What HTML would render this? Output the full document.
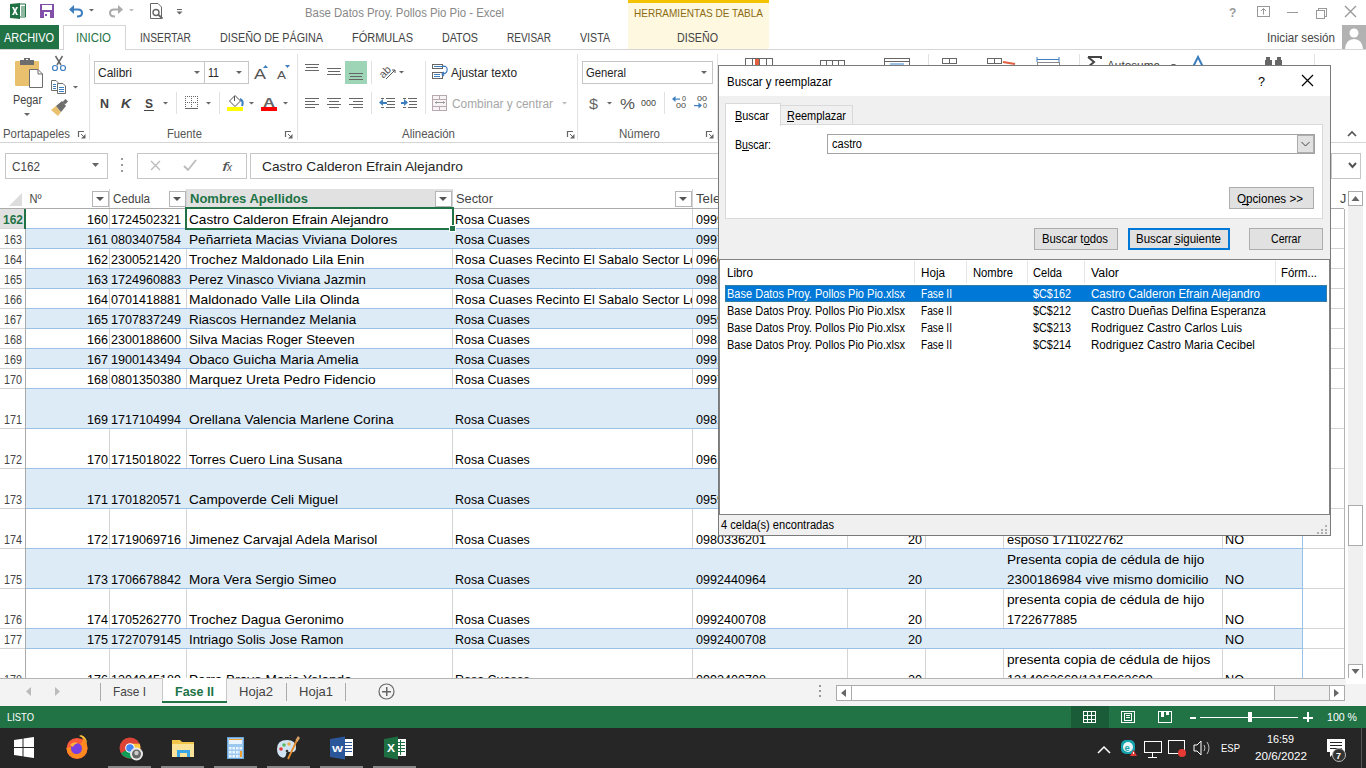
<!DOCTYPE html>
<html><head><meta charset="utf-8"><title>Excel</title>
<style>html,body{margin:0;padding:0;width:1366px;height:768px;overflow:hidden;background:#fff}
svg{display:block}text{font-family:"Liberation Sans",sans-serif;white-space:pre}</style></head><body>
<svg width="1366" height="768" viewBox="0 0 1366 768">
<rect x="0" y="0" width="1366" height="143" fill="#ffffff" />
<rect x="628" y="0" width="141" height="50" fill="#fef8e1" />
<rect x="628" y="0" width="141" height="3" fill="#f3c300" />
<text x="634" y="17" font-size="11.5" fill="#8d6b12" textLength="129" lengthAdjust="spacingAndGlyphs" >HERRAMIENTAS DE TABLA</text>
<text x="305" y="17" font-size="12" fill="#888" textLength="199" lengthAdjust="spacingAndGlyphs" >Base Datos Proy. Pollos Pio Pio - Excel</text>
<path d="M19 4 L25.5 4 L25.5 17 L19 17 Z" fill="#fff" stroke="#217346" stroke-width="1" />
<rect x="21" y="6.5" width="4" height="1" fill="#217346"/>
<rect x="21" y="8.5" width="4" height="1" fill="#217346"/>
<rect x="21" y="10.5" width="4" height="1" fill="#217346"/>
<rect x="21" y="12.5" width="4" height="1" fill="#217346"/>
<rect x="21" y="14.5" width="4" height="1" fill="#217346"/>
<path d="M10 4 L20 3 L20 19 L10 18 Z" fill="#1e7145" />
<path d="M12 7 L14 7 L15 9.5 L16 7 L18 7 L16 11 L18 15 L16 15 L15 12.5 L14 15 L12 15 L14 11 Z" fill="#fff" />
<rect x="40" y="4" width="14" height="14" fill="#8250a8" />
<rect x="42" y="5" width="10" height="5" fill="#ffffff" />
<rect x="44" y="12" width="6" height="6" fill="#ffffff" />
<rect x="45" y="14" width="2" height="2" fill="#8250a8" />
<path d="M71.5 9.5 L78 9.5 Q82 9.5 82 13 Q82 16.5 77 16.5" fill="none" stroke="#3d7ebf" stroke-width="2" />
<path d="M69 9.5 L74 5 L74 14 Z" fill="#3d7ebf" />
<path d="M89 9 L94 9 L91.5 11.5 Z" fill="#666" />
<path d="M120.5 9.5 L114 9.5 Q110 9.5 110 13 Q110 16.5 115 16.5" fill="none" stroke="#aaa" stroke-width="2" />
<path d="M123 9.5 L118 5 L118 14 Z" fill="#aaa" />
<path d="M129 9 L134 9 L131.5 11.5 Z" fill="#bbb" />
<path d="M150.5 3.5 L158 3.5 L161.5 7 L161.5 18.5 L150.5 18.5 Z" fill="#fff" stroke="#666" stroke-width="1" />
<circle cx="156" cy="12.5" r="3" fill="#fff" stroke="#666" stroke-width="1.4"/>
<path d="M158 14.5 L162.5 18.5" fill="none" stroke="#666" stroke-width="1.8" />
<rect x="177" y="9" width="5" height="1" fill="#666"/>
<path d="M176.5 11.5 L182.5 11.5 L179.5 14.5 Z" fill="#666" />
<text x="1229" y="17" font-size="12" fill="#999" font-weight="bold" >?</text>
<rect x="1257.5" y="6.5" width="12" height="10" fill="#fff" stroke="#999" stroke-width="1" />
<path d="M1263.5 8.5 L1263.5 14.5 M1261 11 L1263.5 8.5 L1266 11" fill="none" stroke="#999" stroke-width="1" />
<rect x="1287" y="12" width="11" height="1" fill="#999"/>
<rect x="1318.5" y="8.5" width="8" height="8" fill="#fff" stroke="#999" stroke-width="1" />
<rect x="1316.5" y="10.5" width="8" height="8" fill="#fff" stroke="#999" stroke-width="1" />
<path d="M1345 6 L1356 17 M1356 6 L1345 17" fill="none" stroke="#999" stroke-width="1.4" />
<rect x="0" y="25" width="59" height="25" fill="#217346" />
<text x="4" y="42" font-size="12" fill="#ffffff" textLength="50" lengthAdjust="spacingAndGlyphs" >ARCHIVO</text>
<rect x="0" y="49" width="1366" height="1" fill="#d5d5d5"/>
<rect x="63" y="25" width="63" height="25" fill="#ffffff" />
<rect x="63" y="25" width="1" height="25" fill="#d5d5d5"/>
<rect x="125" y="25" width="1" height="25" fill="#d5d5d5"/>
<rect x="63" y="25" width="63" height="1" fill="#d5d5d5"/>
<text x="76" y="42" font-size="12" fill="#217346" textLength="35" lengthAdjust="spacingAndGlyphs" >INICIO</text>
<text x="140" y="42" font-size="12" fill="#444" textLength="51" lengthAdjust="spacingAndGlyphs" >INSERTAR</text>
<text x="220" y="42" font-size="12" fill="#444" textLength="103" lengthAdjust="spacingAndGlyphs" >DISEÑO DE PÁGINA</text>
<text x="352" y="42" font-size="12" fill="#444" textLength="61" lengthAdjust="spacingAndGlyphs" >FÓRMULAS</text>
<text x="442" y="42" font-size="12" fill="#444" textLength="36" lengthAdjust="spacingAndGlyphs" >DATOS</text>
<text x="507" y="42" font-size="12" fill="#444" textLength="44" lengthAdjust="spacingAndGlyphs" >REVISAR</text>
<text x="580" y="42" font-size="12" fill="#444" textLength="30" lengthAdjust="spacingAndGlyphs" >VISTA</text>
<text x="677" y="42" font-size="12" fill="#444" textLength="41" lengthAdjust="spacingAndGlyphs" >DISEÑO</text>
<text x="1267" y="42" font-size="12" fill="#444" textLength="68" lengthAdjust="spacingAndGlyphs" >Iniciar sesión</text>
<rect x="1342" y="25" width="24" height="24" fill="#b2b2b2" />
<circle cx="1354" cy="33" r="4.5" fill="#fff"/>
<path d="M1345 49 Q1346 39 1354 39 Q1362 39 1363 49 Z" fill="#fff" />
<rect x="0" y="142" width="1366" height="1" fill="#d5d5d5"/>
<rect x="89" y="54" width="1" height="86" fill="#e1e1e1"/>
<rect x="297" y="54" width="1" height="86" fill="#e1e1e1"/>
<rect x="577" y="54" width="1" height="86" fill="#e1e1e1"/>
<rect x="717" y="54" width="1" height="86" fill="#e1e1e1"/>
<path d="M15 62 Q15 61 16 61 L38 61 Q39 61 39 62 L39 86 L16 86 Q15 86 15 85 Z" fill="#e9c06d" />
<rect x="20" y="60" width="14" height="5" fill="#6d6d6d" />
<rect x="24" y="58" width="6" height="3" fill="#6d6d6d" />
<rect x="26" y="59" width="2" height="1" fill="#fff" />
<path d="M29.5 69.5 L38 69.5 L42.5 74 L42.5 87.5 L29.5 87.5 Z" fill="#fff" stroke="#6d6d6d" stroke-width="1" />
<path d="M38 69.5 L38 74 L42.5 74" fill="none" stroke="#6d6d6d" stroke-width="1" />
<text x="13" y="104" font-size="12.5" fill="#444" textLength="29" lengthAdjust="spacingAndGlyphs" >Pegar</text>
<path d="M24 113 L30 113 L27 116 Z" fill="#666" />
<path d="M55.5 56 L61 65 M62.5 56 L57 65" fill="none" stroke="#666" stroke-width="1.5" />
<circle cx="55" cy="68" r="2.5" fill="none" stroke="#3d7ebf" stroke-width="1.2"/>
<circle cx="63" cy="68" r="2.5" fill="none" stroke="#3d7ebf" stroke-width="1.2"/>
<path d="M51.5 80.5 L56 80.5 L58 82.5 L58 90.5 L51.5 90.5 Z" fill="#fff" stroke="#6d6d6d" stroke-width="1" />
<rect x="53" y="84" width="3" height="1" fill="#3d7ebf"/>
<rect x="53" y="86" width="3" height="1" fill="#3d7ebf"/>
<rect x="53" y="88" width="3" height="1" fill="#3d7ebf"/>
<path d="M57.5 83.5 L63 83.5 L65.5 86 L65.5 93.5 L57.5 93.5 Z" fill="#fff" stroke="#6d6d6d" stroke-width="1" />
<rect x="59" y="87" width="5" height="1" fill="#3d7ebf"/>
<rect x="59" y="89" width="5" height="1" fill="#3d7ebf"/>
<rect x="59" y="91" width="5" height="1" fill="#3d7ebf"/>
<path d="M73 86 L78 86 L75.5 88.5 Z" fill="#666" />
<path d="M51 110 L56 106 L61 112 L58 116 Z" fill="#e9c06d" />
<path d="M56 106 L62 101 L66 106 L61 112 Z" fill="#6d6d6d" />
<path d="M62.5 102 L65.5 99 L68 101.5 L65 104.5 Z" fill="#6d6d6d" />
<text x="3" y="138" font-size="12" fill="#555" textLength="67" lengthAdjust="spacingAndGlyphs" >Portapapeles</text>
<path d="M78.5 137 L78.5 131.5 L84 131.5" fill="none" stroke="#666" stroke-width="1.2" />
<path d="M85.5 134 L85.5 138.5 L81 138.5 Z" fill="#666" />
<path d="M81 134 L84 137" fill="none" stroke="#666" stroke-width="1" />
<rect x="94.5" y="61.5" width="110" height="22" fill="#fff" stroke="#c6c6c6" stroke-width="1" />
<rect x="204.5" y="61.5" width="44" height="22" fill="#fff" stroke="#c6c6c6" stroke-width="1" />
<text x="98" y="77" font-size="12.5" fill="#262626" textLength="34" lengthAdjust="spacingAndGlyphs" >Calibri</text>
<path d="M194 71 L200 71 L197 74 Z" fill="#666" />
<text x="208" y="77" font-size="12.5" fill="#262626" textLength="11" lengthAdjust="spacingAndGlyphs" >11</text>
<path d="M236 71 L242 71 L239 74 Z" fill="#666" />
<text x="254" y="79" font-size="14" fill="#555" textLength="12" lengthAdjust="spacingAndGlyphs" >A</text>
<path d="M263 68 L268 68 L265.5 65 Z" fill="#3d7ebf" />
<text x="277" y="79" font-size="11" fill="#555" textLength="9" lengthAdjust="spacingAndGlyphs" >A</text>
<path d="M285 65 L290 65 L287.5 68 Z" fill="#3d7ebf" />
<text x="100" y="108" font-size="12.5" fill="#444" textLength="9" lengthAdjust="spacingAndGlyphs" font-weight="bold" >N</text>
<text x="121" y="108" font-size="12.5" fill="#444" textLength="10" lengthAdjust="spacingAndGlyphs" font-weight="bold" font-style="italic">K</text>
<text x="145" y="108" font-size="12.5" fill="#444" textLength="8" lengthAdjust="spacingAndGlyphs" font-weight="bold" >S</text>
<rect x="144" y="110" width="10" height="1" fill="#444"/>
<path d="M163 102 L168 102 L165.5 104.5 Z" fill="#666" />
<rect x="176" y="92" width="1" height="22" fill="#e1e1e1"/>
<rect x="185" y="96" width="1" height="1" fill="#666" />
<rect x="185" y="102" width="1" height="1" fill="#666" />
<rect x="187" y="96" width="1" height="1" fill="#666" />
<rect x="187" y="102" width="1" height="1" fill="#666" />
<rect x="189" y="96" width="1" height="1" fill="#666" />
<rect x="189" y="102" width="1" height="1" fill="#666" />
<rect x="191" y="96" width="1" height="1" fill="#666" />
<rect x="191" y="102" width="1" height="1" fill="#666" />
<rect x="193" y="96" width="1" height="1" fill="#666" />
<rect x="193" y="102" width="1" height="1" fill="#666" />
<rect x="195" y="96" width="1" height="1" fill="#666" />
<rect x="195" y="102" width="1" height="1" fill="#666" />
<rect x="197" y="96" width="1" height="1" fill="#666" />
<rect x="197" y="102" width="1" height="1" fill="#666" />
<rect x="185" y="96" width="1" height="1" fill="#666" />
<rect x="197" y="96" width="1" height="1" fill="#666" />
<rect x="191" y="96" width="1" height="1" fill="#666" />
<rect x="185" y="98" width="1" height="1" fill="#666" />
<rect x="197" y="98" width="1" height="1" fill="#666" />
<rect x="191" y="98" width="1" height="1" fill="#666" />
<rect x="185" y="100" width="1" height="1" fill="#666" />
<rect x="197" y="100" width="1" height="1" fill="#666" />
<rect x="191" y="100" width="1" height="1" fill="#666" />
<rect x="185" y="102" width="1" height="1" fill="#666" />
<rect x="197" y="102" width="1" height="1" fill="#666" />
<rect x="191" y="102" width="1" height="1" fill="#666" />
<rect x="185" y="104" width="1" height="1" fill="#666" />
<rect x="197" y="104" width="1" height="1" fill="#666" />
<rect x="191" y="104" width="1" height="1" fill="#666" />
<rect x="185" y="106" width="1" height="1" fill="#666" />
<rect x="197" y="106" width="1" height="1" fill="#666" />
<rect x="191" y="106" width="1" height="1" fill="#666" />
<rect x="185" y="108" width="13" height="1" fill="#666"/>
<path d="M206 102 L211 102 L208.5 104.5 Z" fill="#666" />
<rect x="219" y="92" width="1" height="22" fill="#e1e1e1"/>
<path d="M229.5 101 L235 95.5 L240.5 101 L235 106.5 Z" fill="#fff" stroke="#555" stroke-width="1" />
<path d="M234.5 96 L234.5 101" fill="none" stroke="#555" stroke-width="1" />
<path d="M240 99 Q244 101 242 106" fill="none" stroke="#3d7ebf" stroke-width="2" />
<rect x="227" y="107" width="16" height="4" fill="#ffff00" />
<path d="M249 102 L254 102 L251.5 104.5 Z" fill="#666" />
<text x="263" y="106.5" font-size="13" fill="#666" textLength="12" lengthAdjust="spacingAndGlyphs" font-weight="bold" >A</text>
<rect x="261" y="107" width="16" height="4" fill="#ff0000" />
<path d="M283 102 L288 102 L285.5 104.5 Z" fill="#666" />
<text x="167" y="138" font-size="12" fill="#555" textLength="35" lengthAdjust="spacingAndGlyphs" >Fuente</text>
<path d="M285.5 137 L285.5 131.5 L291 131.5" fill="none" stroke="#666" stroke-width="1.2" />
<path d="M292.5 134 L292.5 138.5 L288 138.5 Z" fill="#666" />
<path d="M288 134 L291 137" fill="none" stroke="#666" stroke-width="1" />
<rect x="305" y="64" width="14" height="1" fill="#666"/>
<rect x="306" y="67" width="12" height="1" fill="#666"/>
<rect x="305" y="70" width="14" height="1" fill="#666"/>
<rect x="327" y="68" width="14" height="1" fill="#666"/>
<rect x="328" y="71" width="12" height="1" fill="#666"/>
<rect x="327" y="74" width="14" height="1" fill="#666"/>
<rect x="345" y="61" width="22" height="23" fill="#9fd5b7" />
<rect x="349" y="73" width="14" height="1" fill="#666"/>
<rect x="350" y="76" width="12" height="1" fill="#666"/>
<rect x="349" y="79" width="14" height="1" fill="#666"/>
<rect x="371" y="61" width="1" height="23" fill="#e1e1e1"/>
<text x="378" y="76" font-size="11" fill="#555" textLength="12" lengthAdjust="spacingAndGlyphs" transform="rotate(-45 384 71)">ab</text>
<path d="M386 79 L395 70 M392 70 L395 70 L395 73" fill="none" stroke="#555" stroke-width="1" />
<path d="M399 71 L404 71 L401.5 73.5 Z" fill="#666" />
<rect x="425" y="61" width="1" height="53" fill="#e1e1e1"/>
<rect x="305" y="98" width="14" height="1" fill="#666"/>
<rect x="305" y="101" width="10" height="1" fill="#666"/>
<rect x="305" y="104" width="14" height="1" fill="#666"/>
<rect x="305" y="107" width="10" height="1" fill="#666"/>
<rect x="327" y="98" width="14" height="1" fill="#666"/>
<rect x="329" y="101" width="10" height="1" fill="#666"/>
<rect x="327" y="104" width="14" height="1" fill="#666"/>
<rect x="329" y="107" width="10" height="1" fill="#666"/>
<rect x="349" y="98" width="14" height="1" fill="#666"/>
<rect x="353" y="101" width="10" height="1" fill="#666"/>
<rect x="349" y="104" width="14" height="1" fill="#666"/>
<rect x="353" y="107" width="10" height="1" fill="#666"/>
<rect x="371" y="92" width="1" height="22" fill="#e1e1e1"/>
<rect x="381" y="98" width="3" height="1" fill="#666"/>
<rect x="386" y="98" width="9" height="1" fill="#666"/>
<rect x="387" y="101" width="8" height="1" fill="#666"/>
<rect x="387" y="104" width="8" height="1" fill="#666"/>
<rect x="381" y="107" width="3" height="1" fill="#666"/>
<rect x="386" y="107" width="9" height="1" fill="#666"/>
<path d="M379 102.5 L383 99 L383 106 Z" fill="#3d7ebf" />
<rect x="382" y="102" width="5" height="2" fill="#3d7ebf"/>
<rect x="403" y="98" width="3" height="1" fill="#666"/>
<rect x="408" y="98" width="9" height="1" fill="#666"/>
<rect x="409" y="101" width="8" height="1" fill="#666"/>
<rect x="409" y="104" width="8" height="1" fill="#666"/>
<rect x="403" y="107" width="3" height="1" fill="#666"/>
<rect x="408" y="107" width="9" height="1" fill="#666"/>
<path d="M408 102.5 L404 99 L404 106 Z" fill="#3d7ebf" />
<rect x="401" y="102" width="4" height="2" fill="#3d7ebf"/>
<rect x="432.5" y="64.5" width="10" height="4" fill="#fff" stroke="#666" stroke-width="1" />
<rect x="432.5" y="72.5" width="10" height="6" fill="#fff" stroke="#666" stroke-width="1" />
<rect x="434" y="66" width="12" height="1" fill="#3d7ebf"/>
<rect x="434" y="74" width="6" height="1" fill="#3d7ebf"/>
<rect x="434" y="76" width="6" height="1" fill="#3d7ebf"/>
<path d="M443 66 Q448 66 447 71 Q446 74 442 74 M444 72 L442 74 L444 76" fill="none" stroke="#3d7ebf" stroke-width="1.2" />
<text x="451" y="77" font-size="12.5" fill="#262626" textLength="66" lengthAdjust="spacingAndGlyphs" >Ajustar texto</text>
<rect x="432.5" y="95.5" width="14" height="15" fill="#f8f4f6" stroke="#b8a8b0" stroke-width="1" />
<rect x="432" y="99" width="15" height="1" fill="#b8a8b0"/>
<rect x="432" y="106" width="15" height="1" fill="#b8a8b0"/>
<rect x="439" y="95" width="1" height="4" fill="#b8a8b0"/>
<rect x="439" y="106" width="1" height="5" fill="#b8a8b0"/>
<rect x="435" y="102" width="10" height="1" fill="#999"/>
<path d="M435 102.5 L437 101 L437 104 Z M445 102.5 L443 101 L443 104 Z" fill="#999" />
<text x="452" y="108" font-size="12.5" fill="#a6a6a6" textLength="101" lengthAdjust="spacingAndGlyphs" >Combinar y centrar</text>
<path d="M562 102 L567 102 L564.5 104.5 Z" fill="#bbb" />
<text x="402" y="138" font-size="12" fill="#555" textLength="53" lengthAdjust="spacingAndGlyphs" >Alineación</text>
<path d="M567.5 137 L567.5 131.5 L573 131.5" fill="none" stroke="#666" stroke-width="1.2" />
<path d="M574.5 134 L574.5 138.5 L570 138.5 Z" fill="#666" />
<path d="M570 134 L573 137" fill="none" stroke="#666" stroke-width="1" />
<rect x="582.5" y="61.5" width="130" height="22" fill="#fff" stroke="#c6c6c6" stroke-width="1" />
<text x="586" y="77" font-size="12.5" fill="#262626" textLength="40" lengthAdjust="spacingAndGlyphs" >General</text>
<path d="M701 71 L707 71 L704 74 Z" fill="#666" />
<text x="589" y="109" font-size="15" fill="#666" textLength="9" lengthAdjust="spacingAndGlyphs" >$</text>
<path d="M607 102 L612 102 L609.5 104.5 Z" fill="#666" />
<text x="620" y="109" font-size="14" fill="#555" textLength="15" lengthAdjust="spacingAndGlyphs" >%</text>
<text x="641" y="106" font-size="9.5" fill="#444" textLength="15" lengthAdjust="spacingAndGlyphs" >000</text>
<rect x="664" y="92" width="1" height="22" fill="#e1e1e1"/>
<text x="682" y="101" font-size="8" fill="#444" textLength="4" lengthAdjust="spacingAndGlyphs" >0</text>
<text x="676" y="108" font-size="8" fill="#444" textLength="10" lengthAdjust="spacingAndGlyphs" >00</text>
<path d="M672 99 L675.5 96 L675.5 102 Z" fill="#3d7ebf" />
<rect x="674" y="98.5" width="6" height="1.2" fill="#3d7ebf"/>
<text x="697" y="101" font-size="8" fill="#444" textLength="10" lengthAdjust="spacingAndGlyphs" >00</text>
<text x="703" y="108" font-size="8" fill="#444" textLength="4" lengthAdjust="spacingAndGlyphs" >0</text>
<path d="M702 105.5 L698.5 102.5 L698.5 108.5 Z" fill="#3d7ebf" />
<rect x="694" y="105" width="6" height="1.2" fill="#3d7ebf"/>
<text x="619" y="138" font-size="12" fill="#555" textLength="41" lengthAdjust="spacingAndGlyphs" >Número</text>
<path d="M706.5 137 L706.5 131.5 L712 131.5" fill="none" stroke="#666" stroke-width="1.2" />
<path d="M713.5 134 L713.5 138.5 L709 138.5 Z" fill="#666" />
<path d="M709 134 L712 137" fill="none" stroke="#666" stroke-width="1" />
<rect x="745.5" y="58.5" width="27" height="7" fill="#fff" stroke="#666" stroke-width="1" />
<rect x="755" y="59" width="5" height="6" fill="#e06040" />
<rect x="752" y="58" width="1" height="7" fill="#666"/>
<rect x="759" y="58" width="1" height="7" fill="#666"/>
<rect x="766" y="58" width="1" height="7" fill="#666"/>
<rect x="820.5" y="60.5" width="24" height="5" fill="#fff" stroke="#666" stroke-width="1" />
<rect x="826" y="60" width="1" height="5" fill="#666"/>
<rect x="832" y="60" width="1" height="5" fill="#666"/>
<rect x="838" y="60" width="1" height="5" fill="#666"/>
<rect x="884.5" y="58.5" width="25" height="7" fill="#fff" stroke="#666" stroke-width="1" />
<rect x="885" y="61" width="24" height="1" fill="#666"/>
<rect x="890" y="63" width="14" height="2" fill="#9cc3e5" />
<rect x="928" y="54" width="1" height="11" fill="#e1e1e1"/>
<rect x="942.5" y="58.5" width="14" height="5" fill="#fff" stroke="#666" stroke-width="1" />
<rect x="949" y="58" width="1" height="5" fill="#666"/>
<rect x="987.5" y="58.5" width="14" height="5" fill="#fff" stroke="#666" stroke-width="1" />
<rect x="994" y="58" width="1" height="5" fill="#666"/>
<path d="M1003 62 L1015 64" fill="none" stroke="#e06040" stroke-width="2" />
<path d="M1037 59.5 L1059 59.5 M1037 57 L1037 62 M1059 57 L1059 62" fill="none" stroke="#3d7ebf" stroke-width="1" />
<rect x="1037.5" y="62.5" width="22" height="4" fill="#fff" stroke="#888" stroke-width="1" />
<rect x="1079" y="54" width="1" height="11" fill="#e1e1e1"/>
<path d="M1088 57 L1101 57 L1101 59 M1088 57 L1094 62 L1088 67" fill="none" stroke="#444" stroke-width="2" />
<text x="1107" y="70" font-size="12.5" fill="#444" textLength="53" lengthAdjust="spacingAndGlyphs" >Autosuma</text>
<path d="M1171 64 L1176 64 L1173.5 66.5 Z" fill="#666" />
<path d="M1193 67 L1198 57 L1203 67" fill="none" stroke="#3d7ebf" stroke-width="2" />
<rect x="1265" y="60" width="7" height="6" fill="#666" />
<rect x="1275" y="60" width="7" height="6" fill="#666" />
<rect x="1266" y="57" width="4" height="3" fill="#666" />
<rect x="1277" y="57" width="4" height="3" fill="#666" />
<rect x="1314" y="54" width="1" height="11" fill="#e1e1e1"/>
<path d="M1348 136 L1352 132 L1356 136" fill="none" stroke="#555" stroke-width="1.7" />
<rect x="0" y="143" width="1366" height="535" fill="#ffffff" />
<rect x="5.5" y="153.5" width="102" height="25" fill="#fff" stroke="#c6c6c6" stroke-width="1" />
<text x="12" y="171" font-size="12.5" fill="#444" textLength="28" lengthAdjust="spacingAndGlyphs" >C162</text>
<path d="M92 163 L99 163 L95.5 167 Z" fill="#666" />
<rect x="121" y="158" width="2" height="2" fill="#999" />
<rect x="121" y="164" width="2" height="2" fill="#999" />
<rect x="121" y="170" width="2" height="2" fill="#999" />
<rect x="137.5" y="153.5" width="109" height="25" fill="#fff" stroke="#c6c6c6" stroke-width="1" />
<path d="M151 161 L160 170 M160 161 L151 170" fill="none" stroke="#bbb" stroke-width="1.3" />
<path d="M184 166 L188 170 L196 160" fill="none" stroke="#bbb" stroke-width="1.8" />
<text x="222" y="171" font-size="13" fill="#555" textLength="6" lengthAdjust="spacingAndGlyphs" font-style="italic" font-family="Liberation Serif">f</text>
<text x="227" y="171" font-size="10" fill="#555" font-style="italic" font-family="Liberation Serif">x</text>
<rect x="250.5" y="153.5" width="1096" height="25" fill="#fff" stroke="#c6c6c6" stroke-width="1" />
<text x="262" y="171" font-size="13" fill="#262626" textLength="201" lengthAdjust="spacingAndGlyphs" >Castro Calderon Efrain Alejandro</text>
<rect x="1331.5" y="153.5" width="29" height="25" fill="#fff" stroke="#c6c6c6" stroke-width="1" />
<path d="M1349 163 L1352.5 167 L1356 163" fill="none" stroke="#555" stroke-width="2" />
<defs><clipPath id="gclip"><rect x="0" y="180" width="1347" height="498"/></clipPath></defs>
<g clip-path="url(#gclip)">
<path d="M22 193 L22 206 L9 206 Z" fill="#dcdcdc" />
<rect x="0" y="208" width="1344" height="1" fill="#ababab"/>
<rect x="187" y="189" width="265" height="19" fill="#e1e1e1" />
<text x="29.5" y="203" font-size="13" fill="#444" textLength="12" lengthAdjust="spacingAndGlyphs" >Nº</text>
<text x="113" y="203" font-size="13" fill="#444" textLength="37" lengthAdjust="spacingAndGlyphs" >Cedula</text>
<text x="190" y="203" font-size="13" fill="#217346" textLength="118" lengthAdjust="spacingAndGlyphs" font-weight="bold" >Nombres Apellidos</text>
<text x="456" y="203" font-size="13" fill="#444" textLength="37" lengthAdjust="spacingAndGlyphs" >Sector</text>
<text x="696" y="203" font-size="13" fill="#444" textLength="50" lengthAdjust="spacingAndGlyphs" >Telefono</text>
<rect x="109" y="189" width="1" height="19" fill="#d4d4d4"/>
<rect x="186" y="189" width="1" height="19" fill="#d4d4d4"/>
<rect x="452" y="189" width="1" height="19" fill="#d4d4d4"/>
<rect x="692" y="189" width="1" height="19" fill="#d4d4d4"/>
<rect x="847" y="189" width="1" height="19" fill="#d4d4d4"/>
<rect x="925" y="189" width="1" height="19" fill="#d4d4d4"/>
<rect x="1003" y="189" width="1" height="19" fill="#d4d4d4"/>
<rect x="1222" y="189" width="1" height="19" fill="#d4d4d4"/>
<rect x="1302" y="189" width="1" height="19" fill="#d4d4d4"/>
<rect x="92.5" y="191.5" width="16" height="15" fill="#fff" stroke="#b5b5b5" stroke-width="1" />
<path d="M96 197 L104 197 L100 201 Z" fill="#555" />
<rect x="169.5" y="191.5" width="16" height="15" fill="#fff" stroke="#b5b5b5" stroke-width="1" />
<path d="M173 197 L181 197 L177 201 Z" fill="#555" />
<rect x="435.5" y="191.5" width="16" height="15" fill="#fff" stroke="#b5b5b5" stroke-width="1" />
<path d="M439 197 L447 197 L443 201 Z" fill="#555" />
<rect x="675.5" y="191.5" width="16" height="15" fill="#fff" stroke="#b5b5b5" stroke-width="1" />
<path d="M679 197 L687 197 L683 201 Z" fill="#555" />
<text x="1340" y="203" font-size="12.5" fill="#444" >J</text>
<rect x="25" y="209" width="1" height="20" fill="#ababab"/>
<rect x="109" y="209" width="1" height="20" fill="#d4d4d4"/>
<rect x="186" y="209" width="1" height="20" fill="#d4d4d4"/>
<rect x="452" y="209" width="1" height="20" fill="#d4d4d4"/>
<rect x="692" y="209" width="1" height="20" fill="#d4d4d4"/>
<rect x="847" y="209" width="1" height="20" fill="#d4d4d4"/>
<rect x="925" y="209" width="1" height="20" fill="#d4d4d4"/>
<rect x="1003" y="209" width="1" height="20" fill="#d4d4d4"/>
<rect x="1222" y="209" width="1" height="20" fill="#d4d4d4"/>
<rect x="1302" y="209" width="1" height="20" fill="#9bc2e6"/>
<rect x="1344" y="209" width="1" height="20" fill="#b4b4b4"/>
<rect x="26" y="228" width="1276" height="1" fill="#9bc2e6"/>
<rect x="0" y="228" width="25" height="1" fill="#d4d4d4"/>
<rect x="1303" y="228" width="41" height="1" fill="#d4d4d4"/>
<rect x="0" y="209" width="25" height="19" fill="#e1e1e1" />
<text x="3" y="224" font-size="13" fill="#217346" textLength="20" lengthAdjust="spacingAndGlyphs" font-weight="bold" >162</text>
<text x="108" y="224" font-size="13" fill="#000" textLength="21" lengthAdjust="spacingAndGlyphs" text-anchor="end" >160</text>
<text x="111" y="224" font-size="13" fill="#000" textLength="70" lengthAdjust="spacingAndGlyphs" >1724502321</text>
<text x="189" y="224" font-size="13" fill="#000" textLength="199.3" lengthAdjust="spacingAndGlyphs" >Castro Calderon Efrain Alejandro</text>
<svg x="453" y="209" width="239" height="19" overflow="hidden">
<text x="2" y="15" font-size="13" fill="#000" textLength="74.8" lengthAdjust="spacingAndGlyphs" >Rosa Cuases</text>
</svg>
<svg x="693" y="209" width="154" height="19" overflow="hidden">
<text x="3" y="15" font-size="13" fill="#000" textLength="70" lengthAdjust="spacingAndGlyphs" >0999478512</text>
</svg>
<text x="1225" y="224" font-size="13" fill="#000" textLength="19" lengthAdjust="spacingAndGlyphs" >NO</text>
<rect x="26" y="229" width="1277" height="19" fill="#ddebf7" />
<rect x="25" y="229" width="1" height="20" fill="#ababab"/>
<rect x="1302" y="229" width="1" height="20" fill="#9bc2e6"/>
<rect x="1344" y="229" width="1" height="20" fill="#b4b4b4"/>
<rect x="26" y="248" width="1276" height="1" fill="#9bc2e6"/>
<rect x="0" y="248" width="25" height="1" fill="#d4d4d4"/>
<rect x="1303" y="248" width="41" height="1" fill="#d4d4d4"/>
<text x="4" y="244" font-size="12.5" fill="#444" textLength="18" lengthAdjust="spacingAndGlyphs" >163</text>
<text x="108" y="244" font-size="13" fill="#000" textLength="21" lengthAdjust="spacingAndGlyphs" text-anchor="end" >161</text>
<text x="111" y="244" font-size="13" fill="#000" textLength="70" lengthAdjust="spacingAndGlyphs" >0803407584</text>
<text x="189" y="244" font-size="13" fill="#000" textLength="208.3" lengthAdjust="spacingAndGlyphs" >Peñarrieta Macias Viviana Dolores</text>
<svg x="453" y="229" width="239" height="19" overflow="hidden">
<text x="2" y="15" font-size="13" fill="#000" textLength="74.8" lengthAdjust="spacingAndGlyphs" >Rosa Cuases</text>
</svg>
<svg x="693" y="229" width="154" height="19" overflow="hidden">
<text x="3" y="15" font-size="13" fill="#000" textLength="70" lengthAdjust="spacingAndGlyphs" >0997412563</text>
</svg>
<text x="1225" y="244" font-size="13" fill="#000" textLength="19" lengthAdjust="spacingAndGlyphs" >NO</text>
<rect x="25" y="249" width="1" height="20" fill="#ababab"/>
<rect x="109" y="249" width="1" height="20" fill="#d4d4d4"/>
<rect x="186" y="249" width="1" height="20" fill="#d4d4d4"/>
<rect x="452" y="249" width="1" height="20" fill="#d4d4d4"/>
<rect x="692" y="249" width="1" height="20" fill="#d4d4d4"/>
<rect x="847" y="249" width="1" height="20" fill="#d4d4d4"/>
<rect x="925" y="249" width="1" height="20" fill="#d4d4d4"/>
<rect x="1003" y="249" width="1" height="20" fill="#d4d4d4"/>
<rect x="1222" y="249" width="1" height="20" fill="#d4d4d4"/>
<rect x="1302" y="249" width="1" height="20" fill="#9bc2e6"/>
<rect x="1344" y="249" width="1" height="20" fill="#b4b4b4"/>
<rect x="26" y="268" width="1276" height="1" fill="#9bc2e6"/>
<rect x="0" y="268" width="25" height="1" fill="#d4d4d4"/>
<rect x="1303" y="268" width="41" height="1" fill="#d4d4d4"/>
<text x="4" y="264" font-size="12.5" fill="#444" textLength="18" lengthAdjust="spacingAndGlyphs" >164</text>
<text x="108" y="264" font-size="13" fill="#000" textLength="21" lengthAdjust="spacingAndGlyphs" text-anchor="end" >162</text>
<text x="111" y="264" font-size="13" fill="#000" textLength="70" lengthAdjust="spacingAndGlyphs" >2300521420</text>
<text x="189" y="264" font-size="13" fill="#000" textLength="175.2" lengthAdjust="spacingAndGlyphs" >Trochez Maldonado Lila Enin</text>
<svg x="453" y="249" width="239" height="19" overflow="hidden">
<text x="2" y="15" font-size="13" fill="#000" textLength="242.3" lengthAdjust="spacingAndGlyphs" >Rosa Cuases Recinto El Sabalo Sector Lo</text>
</svg>
<svg x="693" y="249" width="154" height="19" overflow="hidden">
<text x="3" y="15" font-size="13" fill="#000" textLength="70" lengthAdjust="spacingAndGlyphs" >0960514478</text>
</svg>
<text x="1225" y="264" font-size="13" fill="#000" textLength="19" lengthAdjust="spacingAndGlyphs" >NO</text>
<rect x="26" y="269" width="1277" height="19" fill="#ddebf7" />
<rect x="25" y="269" width="1" height="20" fill="#ababab"/>
<rect x="1302" y="269" width="1" height="20" fill="#9bc2e6"/>
<rect x="1344" y="269" width="1" height="20" fill="#b4b4b4"/>
<rect x="26" y="288" width="1276" height="1" fill="#9bc2e6"/>
<rect x="0" y="288" width="25" height="1" fill="#d4d4d4"/>
<rect x="1303" y="288" width="41" height="1" fill="#d4d4d4"/>
<text x="4" y="284" font-size="12.5" fill="#444" textLength="18" lengthAdjust="spacingAndGlyphs" >165</text>
<text x="108" y="284" font-size="13" fill="#000" textLength="21" lengthAdjust="spacingAndGlyphs" text-anchor="end" >163</text>
<text x="111" y="284" font-size="13" fill="#000" textLength="70" lengthAdjust="spacingAndGlyphs" >1724960883</text>
<text x="189" y="284" font-size="13" fill="#000" textLength="176.8" lengthAdjust="spacingAndGlyphs" >Perez Vinasco Viviana Jazmin</text>
<svg x="453" y="269" width="239" height="19" overflow="hidden">
<text x="2" y="15" font-size="13" fill="#000" textLength="74.8" lengthAdjust="spacingAndGlyphs" >Rosa Cuases</text>
</svg>
<svg x="693" y="269" width="154" height="19" overflow="hidden">
<text x="3" y="15" font-size="13" fill="#000" textLength="70" lengthAdjust="spacingAndGlyphs" >0981254698</text>
</svg>
<text x="1225" y="284" font-size="13" fill="#000" textLength="19" lengthAdjust="spacingAndGlyphs" >NO</text>
<rect x="25" y="289" width="1" height="20" fill="#ababab"/>
<rect x="109" y="289" width="1" height="20" fill="#d4d4d4"/>
<rect x="186" y="289" width="1" height="20" fill="#d4d4d4"/>
<rect x="452" y="289" width="1" height="20" fill="#d4d4d4"/>
<rect x="692" y="289" width="1" height="20" fill="#d4d4d4"/>
<rect x="847" y="289" width="1" height="20" fill="#d4d4d4"/>
<rect x="925" y="289" width="1" height="20" fill="#d4d4d4"/>
<rect x="1003" y="289" width="1" height="20" fill="#d4d4d4"/>
<rect x="1222" y="289" width="1" height="20" fill="#d4d4d4"/>
<rect x="1302" y="289" width="1" height="20" fill="#9bc2e6"/>
<rect x="1344" y="289" width="1" height="20" fill="#b4b4b4"/>
<rect x="26" y="308" width="1276" height="1" fill="#9bc2e6"/>
<rect x="0" y="308" width="25" height="1" fill="#d4d4d4"/>
<rect x="1303" y="308" width="41" height="1" fill="#d4d4d4"/>
<text x="4" y="304" font-size="12.5" fill="#444" textLength="18" lengthAdjust="spacingAndGlyphs" >166</text>
<text x="108" y="304" font-size="13" fill="#000" textLength="21" lengthAdjust="spacingAndGlyphs" text-anchor="end" >164</text>
<text x="111" y="304" font-size="13" fill="#000" textLength="70" lengthAdjust="spacingAndGlyphs" >0701418881</text>
<text x="189" y="304" font-size="13" fill="#000" textLength="170.5" lengthAdjust="spacingAndGlyphs" >Maldonado Valle Lila Olinda</text>
<svg x="453" y="289" width="239" height="19" overflow="hidden">
<text x="2" y="15" font-size="13" fill="#000" textLength="242.3" lengthAdjust="spacingAndGlyphs" >Rosa Cuases Recinto El Sabalo Sector Lo</text>
</svg>
<svg x="693" y="289" width="154" height="19" overflow="hidden">
<text x="3" y="15" font-size="13" fill="#000" textLength="70" lengthAdjust="spacingAndGlyphs" >0981452369</text>
</svg>
<text x="1225" y="304" font-size="13" fill="#000" textLength="19" lengthAdjust="spacingAndGlyphs" >NO</text>
<rect x="26" y="309" width="1277" height="19" fill="#ddebf7" />
<rect x="25" y="309" width="1" height="20" fill="#ababab"/>
<rect x="1302" y="309" width="1" height="20" fill="#9bc2e6"/>
<rect x="1344" y="309" width="1" height="20" fill="#b4b4b4"/>
<rect x="26" y="328" width="1276" height="1" fill="#9bc2e6"/>
<rect x="0" y="328" width="25" height="1" fill="#d4d4d4"/>
<rect x="1303" y="328" width="41" height="1" fill="#d4d4d4"/>
<text x="4" y="324" font-size="12.5" fill="#444" textLength="18" lengthAdjust="spacingAndGlyphs" >167</text>
<text x="108" y="324" font-size="13" fill="#000" textLength="21" lengthAdjust="spacingAndGlyphs" text-anchor="end" >165</text>
<text x="111" y="324" font-size="13" fill="#000" textLength="70" lengthAdjust="spacingAndGlyphs" >1707837249</text>
<text x="189" y="324" font-size="13" fill="#000" textLength="167.2" lengthAdjust="spacingAndGlyphs" >Riascos Hernandez Melania</text>
<svg x="453" y="309" width="239" height="19" overflow="hidden">
<text x="2" y="15" font-size="13" fill="#000" textLength="74.8" lengthAdjust="spacingAndGlyphs" >Rosa Cuases</text>
</svg>
<svg x="693" y="309" width="154" height="19" overflow="hidden">
<text x="3" y="15" font-size="13" fill="#000" textLength="70" lengthAdjust="spacingAndGlyphs" >0959874125</text>
</svg>
<text x="1225" y="324" font-size="13" fill="#000" textLength="19" lengthAdjust="spacingAndGlyphs" >NO</text>
<rect x="25" y="329" width="1" height="20" fill="#ababab"/>
<rect x="109" y="329" width="1" height="20" fill="#d4d4d4"/>
<rect x="186" y="329" width="1" height="20" fill="#d4d4d4"/>
<rect x="452" y="329" width="1" height="20" fill="#d4d4d4"/>
<rect x="692" y="329" width="1" height="20" fill="#d4d4d4"/>
<rect x="847" y="329" width="1" height="20" fill="#d4d4d4"/>
<rect x="925" y="329" width="1" height="20" fill="#d4d4d4"/>
<rect x="1003" y="329" width="1" height="20" fill="#d4d4d4"/>
<rect x="1222" y="329" width="1" height="20" fill="#d4d4d4"/>
<rect x="1302" y="329" width="1" height="20" fill="#9bc2e6"/>
<rect x="1344" y="329" width="1" height="20" fill="#b4b4b4"/>
<rect x="26" y="348" width="1276" height="1" fill="#9bc2e6"/>
<rect x="0" y="348" width="25" height="1" fill="#d4d4d4"/>
<rect x="1303" y="348" width="41" height="1" fill="#d4d4d4"/>
<text x="4" y="344" font-size="12.5" fill="#444" textLength="18" lengthAdjust="spacingAndGlyphs" >168</text>
<text x="108" y="344" font-size="13" fill="#000" textLength="21" lengthAdjust="spacingAndGlyphs" text-anchor="end" >166</text>
<text x="111" y="344" font-size="13" fill="#000" textLength="70" lengthAdjust="spacingAndGlyphs" >2300188600</text>
<text x="189" y="344" font-size="13" fill="#000" textLength="165.5" lengthAdjust="spacingAndGlyphs" >Silva Macias Roger Steeven</text>
<svg x="453" y="329" width="239" height="19" overflow="hidden">
<text x="2" y="15" font-size="13" fill="#000" textLength="74.8" lengthAdjust="spacingAndGlyphs" >Rosa Cuases</text>
</svg>
<svg x="693" y="329" width="154" height="19" overflow="hidden">
<text x="3" y="15" font-size="13" fill="#000" textLength="70" lengthAdjust="spacingAndGlyphs" >0981236547</text>
</svg>
<text x="1225" y="344" font-size="13" fill="#000" textLength="19" lengthAdjust="spacingAndGlyphs" >NO</text>
<rect x="26" y="349" width="1277" height="19" fill="#ddebf7" />
<rect x="25" y="349" width="1" height="20" fill="#ababab"/>
<rect x="1302" y="349" width="1" height="20" fill="#9bc2e6"/>
<rect x="1344" y="349" width="1" height="20" fill="#b4b4b4"/>
<rect x="26" y="368" width="1276" height="1" fill="#9bc2e6"/>
<rect x="0" y="368" width="25" height="1" fill="#d4d4d4"/>
<rect x="1303" y="368" width="41" height="1" fill="#d4d4d4"/>
<text x="4" y="364" font-size="12.5" fill="#444" textLength="18" lengthAdjust="spacingAndGlyphs" >169</text>
<text x="108" y="364" font-size="13" fill="#000" textLength="21" lengthAdjust="spacingAndGlyphs" text-anchor="end" >167</text>
<text x="111" y="364" font-size="13" fill="#000" textLength="70" lengthAdjust="spacingAndGlyphs" >1900143494</text>
<text x="189" y="364" font-size="13" fill="#000" textLength="169.7" lengthAdjust="spacingAndGlyphs" >Obaco Guicha Maria Amelia</text>
<svg x="453" y="349" width="239" height="19" overflow="hidden">
<text x="2" y="15" font-size="13" fill="#000" textLength="74.8" lengthAdjust="spacingAndGlyphs" >Rosa Cuases</text>
</svg>
<svg x="693" y="349" width="154" height="19" overflow="hidden">
<text x="3" y="15" font-size="13" fill="#000" textLength="70" lengthAdjust="spacingAndGlyphs" >0991236547</text>
</svg>
<text x="1225" y="364" font-size="13" fill="#000" textLength="19" lengthAdjust="spacingAndGlyphs" >NO</text>
<rect x="25" y="369" width="1" height="20" fill="#ababab"/>
<rect x="109" y="369" width="1" height="20" fill="#d4d4d4"/>
<rect x="186" y="369" width="1" height="20" fill="#d4d4d4"/>
<rect x="452" y="369" width="1" height="20" fill="#d4d4d4"/>
<rect x="692" y="369" width="1" height="20" fill="#d4d4d4"/>
<rect x="847" y="369" width="1" height="20" fill="#d4d4d4"/>
<rect x="925" y="369" width="1" height="20" fill="#d4d4d4"/>
<rect x="1003" y="369" width="1" height="20" fill="#d4d4d4"/>
<rect x="1222" y="369" width="1" height="20" fill="#d4d4d4"/>
<rect x="1302" y="369" width="1" height="20" fill="#9bc2e6"/>
<rect x="1344" y="369" width="1" height="20" fill="#b4b4b4"/>
<rect x="26" y="388" width="1276" height="1" fill="#9bc2e6"/>
<rect x="0" y="388" width="25" height="1" fill="#d4d4d4"/>
<rect x="1303" y="388" width="41" height="1" fill="#d4d4d4"/>
<text x="4" y="384" font-size="12.5" fill="#444" textLength="18" lengthAdjust="spacingAndGlyphs" >170</text>
<text x="108" y="384" font-size="13" fill="#000" textLength="21" lengthAdjust="spacingAndGlyphs" text-anchor="end" >168</text>
<text x="111" y="384" font-size="13" fill="#000" textLength="70" lengthAdjust="spacingAndGlyphs" >0801350380</text>
<text x="189" y="384" font-size="13" fill="#000" textLength="186.6" lengthAdjust="spacingAndGlyphs" >Marquez Ureta Pedro Fidencio</text>
<svg x="453" y="369" width="239" height="19" overflow="hidden">
<text x="2" y="15" font-size="13" fill="#000" textLength="74.8" lengthAdjust="spacingAndGlyphs" >Rosa Cuases</text>
</svg>
<svg x="693" y="369" width="154" height="19" overflow="hidden">
<text x="3" y="15" font-size="13" fill="#000" textLength="70" lengthAdjust="spacingAndGlyphs" >0997856321</text>
</svg>
<text x="1225" y="384" font-size="13" fill="#000" textLength="19" lengthAdjust="spacingAndGlyphs" >NO</text>
<rect x="26" y="389" width="1277" height="39" fill="#ddebf7" />
<rect x="25" y="389" width="1" height="40" fill="#ababab"/>
<rect x="1302" y="389" width="1" height="40" fill="#9bc2e6"/>
<rect x="1344" y="389" width="1" height="40" fill="#b4b4b4"/>
<rect x="26" y="428" width="1276" height="1" fill="#9bc2e6"/>
<rect x="0" y="428" width="25" height="1" fill="#d4d4d4"/>
<rect x="1303" y="428" width="41" height="1" fill="#d4d4d4"/>
<text x="4" y="424" font-size="12.5" fill="#444" textLength="18" lengthAdjust="spacingAndGlyphs" >171</text>
<text x="108" y="424" font-size="13" fill="#000" textLength="21" lengthAdjust="spacingAndGlyphs" text-anchor="end" >169</text>
<text x="111" y="424" font-size="13" fill="#000" textLength="70" lengthAdjust="spacingAndGlyphs" >1717104994</text>
<text x="189" y="424" font-size="13" fill="#000" textLength="204.5" lengthAdjust="spacingAndGlyphs" >Orellana Valencia Marlene Corina</text>
<svg x="453" y="389" width="239" height="39" overflow="hidden">
<text x="2" y="35" font-size="13" fill="#000" textLength="74.8" lengthAdjust="spacingAndGlyphs" >Rosa Cuases</text>
</svg>
<svg x="693" y="389" width="154" height="39" overflow="hidden">
<text x="3" y="35" font-size="13" fill="#000" textLength="70" lengthAdjust="spacingAndGlyphs" >0981478523</text>
</svg>
<text x="1225" y="424" font-size="13" fill="#000" textLength="19" lengthAdjust="spacingAndGlyphs" >NO</text>
<rect x="25" y="429" width="1" height="40" fill="#ababab"/>
<rect x="109" y="429" width="1" height="40" fill="#d4d4d4"/>
<rect x="186" y="429" width="1" height="40" fill="#d4d4d4"/>
<rect x="452" y="429" width="1" height="40" fill="#d4d4d4"/>
<rect x="692" y="429" width="1" height="40" fill="#d4d4d4"/>
<rect x="847" y="429" width="1" height="40" fill="#d4d4d4"/>
<rect x="925" y="429" width="1" height="40" fill="#d4d4d4"/>
<rect x="1003" y="429" width="1" height="40" fill="#d4d4d4"/>
<rect x="1222" y="429" width="1" height="40" fill="#d4d4d4"/>
<rect x="1302" y="429" width="1" height="40" fill="#9bc2e6"/>
<rect x="1344" y="429" width="1" height="40" fill="#b4b4b4"/>
<rect x="26" y="468" width="1276" height="1" fill="#9bc2e6"/>
<rect x="0" y="468" width="25" height="1" fill="#d4d4d4"/>
<rect x="1303" y="468" width="41" height="1" fill="#d4d4d4"/>
<text x="4" y="464" font-size="12.5" fill="#444" textLength="18" lengthAdjust="spacingAndGlyphs" >172</text>
<text x="108" y="464" font-size="13" fill="#000" textLength="21" lengthAdjust="spacingAndGlyphs" text-anchor="end" >170</text>
<text x="111" y="464" font-size="13" fill="#000" textLength="70" lengthAdjust="spacingAndGlyphs" >1715018022</text>
<text x="189" y="464" font-size="13" fill="#000" textLength="153.4" lengthAdjust="spacingAndGlyphs" >Torres Cuero Lina Susana</text>
<svg x="453" y="429" width="239" height="39" overflow="hidden">
<text x="2" y="35" font-size="13" fill="#000" textLength="74.8" lengthAdjust="spacingAndGlyphs" >Rosa Cuases</text>
</svg>
<svg x="693" y="429" width="154" height="39" overflow="hidden">
<text x="3" y="35" font-size="13" fill="#000" textLength="70" lengthAdjust="spacingAndGlyphs" >0961234785</text>
</svg>
<text x="1225" y="464" font-size="13" fill="#000" textLength="19" lengthAdjust="spacingAndGlyphs" >NO</text>
<rect x="26" y="469" width="1277" height="39" fill="#ddebf7" />
<rect x="25" y="469" width="1" height="40" fill="#ababab"/>
<rect x="1302" y="469" width="1" height="40" fill="#9bc2e6"/>
<rect x="1344" y="469" width="1" height="40" fill="#b4b4b4"/>
<rect x="26" y="508" width="1276" height="1" fill="#9bc2e6"/>
<rect x="0" y="508" width="25" height="1" fill="#d4d4d4"/>
<rect x="1303" y="508" width="41" height="1" fill="#d4d4d4"/>
<text x="4" y="504" font-size="12.5" fill="#444" textLength="18" lengthAdjust="spacingAndGlyphs" >173</text>
<text x="108" y="504" font-size="13" fill="#000" textLength="21" lengthAdjust="spacingAndGlyphs" text-anchor="end" >171</text>
<text x="111" y="504" font-size="13" fill="#000" textLength="70" lengthAdjust="spacingAndGlyphs" >1701820571</text>
<text x="189" y="504" font-size="13" fill="#000" textLength="149.0" lengthAdjust="spacingAndGlyphs" >Campoverde Celi Miguel</text>
<svg x="453" y="469" width="239" height="39" overflow="hidden">
<text x="2" y="35" font-size="13" fill="#000" textLength="74.8" lengthAdjust="spacingAndGlyphs" >Rosa Cuases</text>
</svg>
<svg x="693" y="469" width="154" height="39" overflow="hidden">
<text x="3" y="35" font-size="13" fill="#000" textLength="70" lengthAdjust="spacingAndGlyphs" >0959632147</text>
</svg>
<text x="1225" y="504" font-size="13" fill="#000" textLength="19" lengthAdjust="spacingAndGlyphs" >NO</text>
<rect x="25" y="509" width="1" height="40" fill="#ababab"/>
<rect x="109" y="509" width="1" height="40" fill="#d4d4d4"/>
<rect x="186" y="509" width="1" height="40" fill="#d4d4d4"/>
<rect x="452" y="509" width="1" height="40" fill="#d4d4d4"/>
<rect x="692" y="509" width="1" height="40" fill="#d4d4d4"/>
<rect x="847" y="509" width="1" height="40" fill="#d4d4d4"/>
<rect x="925" y="509" width="1" height="40" fill="#d4d4d4"/>
<rect x="1003" y="509" width="1" height="40" fill="#d4d4d4"/>
<rect x="1222" y="509" width="1" height="40" fill="#d4d4d4"/>
<rect x="1302" y="509" width="1" height="40" fill="#9bc2e6"/>
<rect x="1344" y="509" width="1" height="40" fill="#b4b4b4"/>
<rect x="26" y="548" width="1276" height="1" fill="#9bc2e6"/>
<rect x="0" y="548" width="25" height="1" fill="#d4d4d4"/>
<rect x="1303" y="548" width="41" height="1" fill="#d4d4d4"/>
<text x="4" y="544" font-size="12.5" fill="#444" textLength="18" lengthAdjust="spacingAndGlyphs" >174</text>
<text x="108" y="544" font-size="13" fill="#000" textLength="21" lengthAdjust="spacingAndGlyphs" text-anchor="end" >172</text>
<text x="111" y="544" font-size="13" fill="#000" textLength="70" lengthAdjust="spacingAndGlyphs" >1719069716</text>
<text x="189" y="544" font-size="13" fill="#000" textLength="188.3" lengthAdjust="spacingAndGlyphs" >Jimenez Carvajal Adela Marisol</text>
<svg x="453" y="509" width="239" height="39" overflow="hidden">
<text x="2" y="35" font-size="13" fill="#000" textLength="74.8" lengthAdjust="spacingAndGlyphs" >Rosa Cuases</text>
</svg>
<svg x="693" y="509" width="154" height="39" overflow="hidden">
<text x="3" y="35" font-size="13" fill="#000" textLength="70" lengthAdjust="spacingAndGlyphs" >0980336201</text>
</svg>
<text x="922" y="544" font-size="13" fill="#000" textLength="14" lengthAdjust="spacingAndGlyphs" text-anchor="end" >20</text>
<text x="1007" y="524" font-size="13" fill="#000" textLength="171.2" lengthAdjust="spacingAndGlyphs" >presenta copia de cédula de</text>
<text x="1007" y="544" font-size="13" fill="#000" textLength="116.3" lengthAdjust="spacingAndGlyphs" >esposo 1711022762</text>
<text x="1225" y="544" font-size="13" fill="#000" textLength="19" lengthAdjust="spacingAndGlyphs" >NO</text>
<rect x="26" y="549" width="1277" height="39" fill="#ddebf7" />
<rect x="25" y="549" width="1" height="40" fill="#ababab"/>
<rect x="1302" y="549" width="1" height="40" fill="#9bc2e6"/>
<rect x="1344" y="549" width="1" height="40" fill="#b4b4b4"/>
<rect x="26" y="588" width="1276" height="1" fill="#9bc2e6"/>
<rect x="0" y="588" width="25" height="1" fill="#d4d4d4"/>
<rect x="1303" y="588" width="41" height="1" fill="#d4d4d4"/>
<text x="4" y="584" font-size="12.5" fill="#444" textLength="18" lengthAdjust="spacingAndGlyphs" >175</text>
<text x="108" y="584" font-size="13" fill="#000" textLength="21" lengthAdjust="spacingAndGlyphs" text-anchor="end" >173</text>
<text x="111" y="584" font-size="13" fill="#000" textLength="70" lengthAdjust="spacingAndGlyphs" >1706678842</text>
<text x="189" y="584" font-size="13" fill="#000" textLength="147.4" lengthAdjust="spacingAndGlyphs" >Mora Vera Sergio Simeo</text>
<svg x="453" y="549" width="239" height="39" overflow="hidden">
<text x="2" y="35" font-size="13" fill="#000" textLength="74.8" lengthAdjust="spacingAndGlyphs" >Rosa Cuases</text>
</svg>
<svg x="693" y="549" width="154" height="39" overflow="hidden">
<text x="3" y="35" font-size="13" fill="#000" textLength="70" lengthAdjust="spacingAndGlyphs" >0992440964</text>
</svg>
<text x="922" y="584" font-size="13" fill="#000" textLength="14" lengthAdjust="spacingAndGlyphs" text-anchor="end" >20</text>
<text x="1007" y="564" font-size="13" fill="#000" textLength="197.3" lengthAdjust="spacingAndGlyphs" >Presenta copia de cédula de hijo</text>
<text x="1007" y="584" font-size="13" fill="#000" textLength="201.6" lengthAdjust="spacingAndGlyphs" >2300186984 vive mismo domicilio</text>
<text x="1225" y="584" font-size="13" fill="#000" textLength="19" lengthAdjust="spacingAndGlyphs" >NO</text>
<rect x="25" y="589" width="1" height="40" fill="#ababab"/>
<rect x="109" y="589" width="1" height="40" fill="#d4d4d4"/>
<rect x="186" y="589" width="1" height="40" fill="#d4d4d4"/>
<rect x="452" y="589" width="1" height="40" fill="#d4d4d4"/>
<rect x="692" y="589" width="1" height="40" fill="#d4d4d4"/>
<rect x="847" y="589" width="1" height="40" fill="#d4d4d4"/>
<rect x="925" y="589" width="1" height="40" fill="#d4d4d4"/>
<rect x="1003" y="589" width="1" height="40" fill="#d4d4d4"/>
<rect x="1222" y="589" width="1" height="40" fill="#d4d4d4"/>
<rect x="1302" y="589" width="1" height="40" fill="#9bc2e6"/>
<rect x="1344" y="589" width="1" height="40" fill="#b4b4b4"/>
<rect x="26" y="628" width="1276" height="1" fill="#9bc2e6"/>
<rect x="0" y="628" width="25" height="1" fill="#d4d4d4"/>
<rect x="1303" y="628" width="41" height="1" fill="#d4d4d4"/>
<text x="4" y="624" font-size="12.5" fill="#444" textLength="18" lengthAdjust="spacingAndGlyphs" >176</text>
<text x="108" y="624" font-size="13" fill="#000" textLength="21" lengthAdjust="spacingAndGlyphs" text-anchor="end" >174</text>
<text x="111" y="624" font-size="13" fill="#000" textLength="70" lengthAdjust="spacingAndGlyphs" >1705262770</text>
<text x="189" y="624" font-size="13" fill="#000" textLength="154.7" lengthAdjust="spacingAndGlyphs" >Trochez Dagua Geronimo</text>
<svg x="453" y="589" width="239" height="39" overflow="hidden">
<text x="2" y="35" font-size="13" fill="#000" textLength="74.8" lengthAdjust="spacingAndGlyphs" >Rosa Cuases</text>
</svg>
<svg x="693" y="589" width="154" height="39" overflow="hidden">
<text x="3" y="35" font-size="13" fill="#000" textLength="70" lengthAdjust="spacingAndGlyphs" >0992400708</text>
</svg>
<text x="922" y="624" font-size="13" fill="#000" textLength="14" lengthAdjust="spacingAndGlyphs" text-anchor="end" >20</text>
<text x="1007" y="604" font-size="13" fill="#000" textLength="197.4" lengthAdjust="spacingAndGlyphs" >presenta copia de cédula de hijo</text>
<text x="1007" y="624" font-size="13" fill="#000" textLength="70" lengthAdjust="spacingAndGlyphs" >1722677885</text>
<text x="1225" y="624" font-size="13" fill="#000" textLength="19" lengthAdjust="spacingAndGlyphs" >NO</text>
<rect x="26" y="629" width="1277" height="19" fill="#ddebf7" />
<rect x="25" y="629" width="1" height="20" fill="#ababab"/>
<rect x="1302" y="629" width="1" height="20" fill="#9bc2e6"/>
<rect x="1344" y="629" width="1" height="20" fill="#b4b4b4"/>
<rect x="26" y="648" width="1276" height="1" fill="#9bc2e6"/>
<rect x="0" y="648" width="25" height="1" fill="#d4d4d4"/>
<rect x="1303" y="648" width="41" height="1" fill="#d4d4d4"/>
<text x="4" y="644" font-size="12.5" fill="#444" textLength="18" lengthAdjust="spacingAndGlyphs" >177</text>
<text x="108" y="644" font-size="13" fill="#000" textLength="21" lengthAdjust="spacingAndGlyphs" text-anchor="end" >175</text>
<text x="111" y="644" font-size="13" fill="#000" textLength="70" lengthAdjust="spacingAndGlyphs" >1727079145</text>
<text x="189" y="644" font-size="13" fill="#000" textLength="154.4" lengthAdjust="spacingAndGlyphs" >Intriago Solis Jose Ramon</text>
<svg x="453" y="629" width="239" height="19" overflow="hidden">
<text x="2" y="15" font-size="13" fill="#000" textLength="74.8" lengthAdjust="spacingAndGlyphs" >Rosa Cuases</text>
</svg>
<svg x="693" y="629" width="154" height="19" overflow="hidden">
<text x="3" y="15" font-size="13" fill="#000" textLength="70" lengthAdjust="spacingAndGlyphs" >0992400708</text>
</svg>
<text x="922" y="644" font-size="13" fill="#000" textLength="14" lengthAdjust="spacingAndGlyphs" text-anchor="end" >20</text>
<text x="1225" y="644" font-size="13" fill="#000" textLength="19" lengthAdjust="spacingAndGlyphs" >NO</text>
<rect x="25" y="649" width="1" height="40" fill="#ababab"/>
<rect x="109" y="649" width="1" height="40" fill="#d4d4d4"/>
<rect x="186" y="649" width="1" height="40" fill="#d4d4d4"/>
<rect x="452" y="649" width="1" height="40" fill="#d4d4d4"/>
<rect x="692" y="649" width="1" height="40" fill="#d4d4d4"/>
<rect x="847" y="649" width="1" height="40" fill="#d4d4d4"/>
<rect x="925" y="649" width="1" height="40" fill="#d4d4d4"/>
<rect x="1003" y="649" width="1" height="40" fill="#d4d4d4"/>
<rect x="1222" y="649" width="1" height="40" fill="#d4d4d4"/>
<rect x="1302" y="649" width="1" height="40" fill="#9bc2e6"/>
<rect x="1344" y="649" width="1" height="40" fill="#b4b4b4"/>
<rect x="26" y="688" width="1276" height="1" fill="#9bc2e6"/>
<rect x="0" y="688" width="25" height="1" fill="#d4d4d4"/>
<rect x="1303" y="688" width="41" height="1" fill="#d4d4d4"/>
<text x="4" y="684" font-size="12.5" fill="#444" textLength="18" lengthAdjust="spacingAndGlyphs" >178</text>
<text x="108" y="684" font-size="13" fill="#000" textLength="21" lengthAdjust="spacingAndGlyphs" text-anchor="end" >176</text>
<text x="111" y="684" font-size="13" fill="#000" textLength="70" lengthAdjust="spacingAndGlyphs" >1304945189</text>
<text x="189" y="684" font-size="13" fill="#000" textLength="162.7" lengthAdjust="spacingAndGlyphs" >Parra Bravo Maria Yolanda</text>
<svg x="453" y="649" width="239" height="39" overflow="hidden">
<text x="2" y="35" font-size="13" fill="#000" textLength="74.8" lengthAdjust="spacingAndGlyphs" >Rosa Cuases</text>
</svg>
<svg x="693" y="649" width="154" height="39" overflow="hidden">
<text x="3" y="35" font-size="13" fill="#000" textLength="70" lengthAdjust="spacingAndGlyphs" >0992400708</text>
</svg>
<text x="922" y="684" font-size="13" fill="#000" textLength="14" lengthAdjust="spacingAndGlyphs" text-anchor="end" >20</text>
<text x="1007" y="664" font-size="13" fill="#000" textLength="203.3" lengthAdjust="spacingAndGlyphs" >presenta copia de cédula de hijos</text>
<text x="1007" y="684" font-size="13" fill="#000" textLength="145.8" lengthAdjust="spacingAndGlyphs" >1314962669/1315962699</text>
<text x="1225" y="684" font-size="13" fill="#000" textLength="19" lengthAdjust="spacingAndGlyphs" >NO</text>
<rect x="24" y="209" width="2" height="20" fill="#217346"/>
<rect x="185" y="207" width="269" height="2" fill="#217346" />
<rect x="185" y="207" width="2" height="23" fill="#217346" />
<rect x="452" y="207" width="2" height="18" fill="#217346" />
<rect x="185" y="228" width="264" height="2" fill="#217346" />
<rect x="449" y="225" width="7" height="7" fill="#fff" />
<rect x="450" y="226" width="5" height="5" fill="#217346" />
</g>
<rect x="1348" y="206" width="15" height="472" fill="#f0f0f0" />
<rect x="1348.5" y="191.5" width="14" height="14" fill="#fff" stroke="#ababab" stroke-width="1" />
<path d="M1351.5 201 L1359.5 201 L1355.5 196 Z" fill="#666" />
<rect x="1348.5" y="505.5" width="14" height="40" fill="#fff" stroke="#ababab" stroke-width="1" />
<rect x="1348.5" y="664.5" width="14" height="14" fill="#fff" stroke="#ababab" stroke-width="1" />
<path d="M1351.5 669 L1359.5 669 L1355.5 674 Z" fill="#666" />
<rect x="0" y="679" width="1366" height="27" fill="#f3f3f3" />
<rect x="1346" y="678" width="20" height="6" fill="#ffffff" />
<rect x="0" y="678" width="1345" height="1" fill="#b4b4b4"/>
<path d="M31 687 L26 691.5 L31 696 Z" fill="#bbb" />
<path d="M55 687 L60 691.5 L55 696 Z" fill="#bbb" />
<rect x="100" y="683" width="1" height="18" fill="#ababab"/>
<rect x="286" y="683" width="1" height="18" fill="#ababab"/>
<rect x="345" y="683" width="1" height="18" fill="#ababab"/>
<rect x="163" y="678" width="63" height="25" fill="#ffffff" />
<rect x="162" y="678" width="1" height="25" fill="#c8c8c8"/>
<rect x="226" y="678" width="1" height="25" fill="#c8c8c8"/>
<rect x="162" y="701" width="65" height="2" fill="#217346"/>
<text x="113" y="696" font-size="13" fill="#444" textLength="33" lengthAdjust="spacingAndGlyphs" >Fase I</text>
<text x="175" y="696" font-size="13" fill="#217346" textLength="39" lengthAdjust="spacingAndGlyphs" font-weight="bold" >Fase II</text>
<text x="239" y="696" font-size="13" fill="#444" textLength="34" lengthAdjust="spacingAndGlyphs" >Hoja2</text>
<text x="299" y="696" font-size="13" fill="#444" textLength="34" lengthAdjust="spacingAndGlyphs" >Hoja1</text>
<circle cx="386.5" cy="691.5" r="7.5" fill="none" stroke="#666" stroke-width="1.2"/>
<rect x="382" y="691" width="9" height="1.5" fill="#666"/>
<rect x="386" y="687" width="1.5" height="9" fill="#666"/>
<rect x="819" y="685" width="2" height="2" fill="#999" />
<rect x="819" y="690" width="2" height="2" fill="#999" />
<rect x="819" y="695" width="2" height="2" fill="#999" />
<rect x="836.5" y="685.5" width="508" height="15" fill="#f0f0f0" stroke="#ababab" stroke-width="1" />
<rect x="851.5" y="685.5" width="423" height="15" fill="#ffffff" stroke="#ababab" stroke-width="1" />
<rect x="836.5" y="685.5" width="15" height="15" fill="#fff" stroke="#ababab" stroke-width="1" />
<rect x="1329.5" y="685.5" width="15" height="15" fill="#fff" stroke="#ababab" stroke-width="1" />
<path d="M846 689 L841 693 L846 697 Z" fill="#666" />
<path d="M1334 689 L1339 693 L1334 697 Z" fill="#666" />
<rect x="0" y="706" width="1366" height="22" fill="#217346" />
<text x="7" y="721" font-size="11.5" fill="#ffffff" textLength="27" lengthAdjust="spacingAndGlyphs" >LISTO</text>
<rect x="1071" y="706" width="38" height="22" fill="#1a5c38" />
<rect x="1083.5" y="711.5" width="12" height="11" fill="none" stroke="#fff" stroke-width="1" />
<rect x="1087" y="711" width="1" height="12" fill="#fff"/>
<rect x="1091" y="711" width="1" height="12" fill="#fff"/>
<rect x="1083" y="715" width="13" height="1" fill="#fff"/>
<rect x="1083" y="719" width="13" height="1" fill="#fff"/>
<rect x="1121.5" y="711.5" width="13" height="11" fill="none" stroke="#fff" stroke-width="1" />
<rect x="1124.5" y="713.5" width="7" height="7" fill="none" stroke="#fff" stroke-width="1" />
<rect x="1126" y="715" width="4" height="1" fill="#fff"/>
<rect x="1126" y="717" width="4" height="1" fill="#fff"/>
<rect x="1158.5" y="711.5" width="13" height="11" fill="none" stroke="#fff" stroke-width="1" />
<rect x="1161" y="711" width="3" height="6" fill="#fff" />
<rect x="1166" y="711" width="3" height="4" fill="#fff" />
<rect x="1190" y="717" width="6" height="2" fill="#fff"/>
<rect x="1200" y="717" width="98" height="1" fill="#fff"/>
<rect x="1248" y="712" width="4" height="10" fill="#fff" />
<rect x="1303" y="717" width="10" height="2" fill="#fff"/>
<rect x="1307" y="712" width="2" height="10" fill="#fff"/>
<text x="1327" y="721" font-size="11.5" fill="#ffffff" textLength="30" lengthAdjust="spacingAndGlyphs" >100 %</text>
<rect x="0" y="728" width="1366" height="40" fill="#262626" />
<path d="M14 740 L22.5 738.8 L22.5 747 L14 747 Z" fill="#fff" />
<path d="M23.5 738.6 L34 737 L34 747 L23.5 747 Z" fill="#fff" />
<path d="M14 748 L22.5 748 L22.5 756.2 L14 755 Z" fill="#fff" />
<path d="M23.5 748 L34 748 L34 758 L23.5 756.4 Z" fill="#fff" />
<circle cx="77" cy="748.5" r="10.5" fill="#ff5a3c"/>
<path d="M66.5 748 A10.5 10.5 0 0 0 87.5 748 Q87 741 82 737 Q84 742 80 744 Z" fill="#ff8a1f"/>
<path d="M79 736 Q85 738 87 744 Q87 737 81 735 Z" fill="#ffc23a"/>
<circle cx="76.5" cy="748.5" r="5.5" fill="#7a3fe0"/>
<path d="M70 745 Q73 741 78 743 Q74 744 73 747 Z" fill="#ffb13b"/>
<circle cx="130" cy="748" r="10.5" fill="#db4437"/>
<path d="M130 748 L120.9 753.2 A10.5 10.5 0 0 0 135.2 757.1 Z" fill="#0f9d58"/>
<path d="M130 748 L135.2 757.1 A10.5 10.5 0 0 0 139.7 743.8 Z" fill="#ffcd40"/>
<path d="M130 748 L139.7 743.8 L130 743.8 Z" fill="#ffcd40"/>
<circle cx="130" cy="748" r="4.8" fill="#fff"/><circle cx="130" cy="748" r="3.8" fill="#4285f4"/>
<circle cx="136.5" cy="754" r="6.5" fill="#e8e8e8"/><circle cx="136.5" cy="754" r="4.5" fill="#666"/><circle cx="136.5" cy="753" r="2.2" fill="#ccc"/>
<path d="M172 740 L180 740 L182 742 L194 742 L194 757 L172 757 Z" fill="#f0c54a" />
<rect x="172" y="744" width="22" height="13" fill="#fbe39a" />
<path d="M177 757 L177 750 L190 750 L190 757 L187 757 L187 753 L180 753 L180 757 Z" fill="#3ba6e6" />
<rect x="227" y="737" width="17" height="22" fill="#9cc8ef" />
<rect x="227.5" y="737.5" width="16" height="21" fill="none" stroke="#6aa6dc" stroke-width="1" />
<rect x="229" y="739" width="13" height="5" fill="#eaf4fd" />
<rect x="229" y="739" width="13" height="1" fill="#f0a030"/>
<rect x="229" y="747" width="2.5" height="2.5" fill="#eaf4fd" />
<rect x="232.5" y="747" width="2.5" height="2.5" fill="#eaf4fd" />
<rect x="236" y="747" width="2.5" height="2.5" fill="#eaf4fd" />
<rect x="239.5" y="747" width="2.5" height="2.5" fill="#eaf4fd" />
<rect x="229" y="751" width="2.5" height="2.5" fill="#eaf4fd" />
<rect x="232.5" y="751" width="2.5" height="2.5" fill="#eaf4fd" />
<rect x="236" y="751" width="2.5" height="2.5" fill="#eaf4fd" />
<rect x="239.5" y="751" width="2.5" height="2.5" fill="#eaf4fd" />
<rect x="229" y="755" width="2.5" height="2.5" fill="#eaf4fd" />
<rect x="232.5" y="755" width="2.5" height="2.5" fill="#eaf4fd" />
<rect x="236" y="755" width="2.5" height="2.5" fill="#eaf4fd" />
<rect x="239.5" y="755" width="2.5" height="2.5" fill="#eaf4fd" />
<rect x="240" y="751" width="2" height="6" fill="#f0a030" />
<path d="M277 749 Q277 740 287 740 Q296 740 296 748 Q296 753 290 752 Q286 751 286 755 Q285 759 281 757 Q277 755 277 749 Z" fill="#cfe3f3" />
<circle cx="281" cy="749" r="1.8" fill="#e53935"/><circle cx="284" cy="745" r="1.8" fill="#5cb85c"/><circle cx="289" cy="744" r="1.8" fill="#f0ad4e"/><circle cx="287" cy="751" r="1.3" fill="#333"/>
<path d="M288 759 L297 740" fill="none" stroke="#e38b2c" stroke-width="1.8" />
<path d="M295.5 740 L298 736 L300 738 L297.5 742 Z" fill="#d9a066" />
<rect x="342" y="739" width="11" height="17" fill="#ffffff" />
<rect x="344" y="742" width="8" height="1" fill="#2b579a"/>
<rect x="344" y="745" width="8" height="1" fill="#2b579a"/>
<rect x="344" y="748" width="8" height="1" fill="#2b579a"/>
<rect x="344" y="751" width="8" height="1" fill="#2b579a"/>
<path d="M330 739 L345 736.5 L345 759.5 L330 757 Z" fill="#2b579a" />
<text x="332" y="752" font-size="9.5" fill="#fff" textLength="11" lengthAdjust="spacingAndGlyphs" font-weight="bold" >W</text>
<rect x="395" y="739" width="11" height="17" fill="#ffffff" />
<rect x="397" y="742" width="8" height="1" fill="#1d6f42"/>
<rect x="397" y="745" width="8" height="1" fill="#1d6f42"/>
<rect x="397" y="748" width="8" height="1" fill="#1d6f42"/>
<rect x="397" y="751" width="8" height="1" fill="#1d6f42"/>
<rect x="400" y="740" width="1" height="15" fill="#1d6f42"/>
<path d="M384 739 L398 736.5 L398 759.5 L384 757 Z" fill="#1d6f42" />
<text x="387" y="752" font-size="10" fill="#fff" textLength="8" lengthAdjust="spacingAndGlyphs" font-weight="bold" >X</text>
<rect x="108" y="766" width="43" height="2" fill="#888888" />
<rect x="161" y="766" width="43" height="2" fill="#888888" />
<rect x="214" y="766" width="43" height="2" fill="#888888" />
<rect x="267" y="766" width="43" height="2" fill="#888888" />
<rect x="320" y="766" width="43" height="2" fill="#888888" />
<rect x="373" y="766" width="43" height="2" fill="#888888" />
<path d="M1098 753 L1104 747 L1110 753" fill="none" stroke="#fff" stroke-width="1.5" />
<rect x="1121" y="740" width="14" height="14" fill="#17a2ad" rx="5"/>
<circle cx="1128" cy="747" r="5" fill="#e8f6f7"/>
<text x="1124.5" y="751" font-size="9.5" fill="#17a2ad" font-weight="bold" >e</text>
<path d="M1130 756 L1133.5 750 L1137 756 Z" fill="#e53935" />
<rect x="1133" y="752" width="1" height="2" fill="#fff" />
<rect x="1144.5" y="741.5" width="17" height="11" fill="none" stroke="#fff" stroke-width="1" />
<rect x="1152" y="753" width="1" height="4" fill="#fff"/>
<rect x="1148" y="757" width="9" height="1" fill="#fff"/>
<rect x="1168.5" y="740.5" width="16" height="13" fill="none" stroke="#fff" stroke-width="1" />
<circle cx="1182" cy="753" r="4" fill="#e53935"/>
<path d="M1194 745 L1197 745 L1201 741 L1201 755 L1197 751 L1194 751 Z" fill="none" stroke="#fff" stroke-width="1" />
<path d="M1204 745 Q1206 748 1204 751 M1207 742 Q1211 748 1207 754" fill="none" stroke="#bbb" stroke-width="1" />
<text x="1221" y="752" font-size="11.5" fill="#ffffff" textLength="19" lengthAdjust="spacingAndGlyphs" >ESP</text>
<text x="1267" y="743" font-size="11.5" fill="#ffffff" textLength="27" lengthAdjust="spacingAndGlyphs" >16:59</text>
<text x="1255" y="760" font-size="11.5" fill="#ffffff" textLength="52" lengthAdjust="spacingAndGlyphs" >20/6/2022</text>
<rect x="1327" y="739" width="18" height="13" fill="#fff" />
<path d="M1330 752 L1330 757 L1335 752 Z" fill="#fff" />
<rect x="1330" y="742" width="12" height="1" fill="#262626"/>
<rect x="1330" y="745" width="12" height="1" fill="#262626"/>
<rect x="1330" y="748" width="12" height="1" fill="#262626"/>
<circle cx="1339" cy="755" r="6.5" fill="#333" stroke="#bbb" stroke-width="1"/>
<text x="1336" y="759" font-size="9" fill="#fff" font-weight="bold" >7</text>
<rect x="1361" y="728" width="1" height="40" fill="#555"/>
<rect x="718.5" y="65.5" width="612" height="470" fill="#f0f0f0" stroke="#7a7a7a" stroke-width="1" />
<rect x="719" y="66" width="611" height="30" fill="#ffffff" />
<text x="727" y="86" font-size="12" fill="#000" textLength="105" lengthAdjust="spacingAndGlyphs" >Buscar y reemplazar</text>
<text x="1258" y="86" font-size="13" fill="#000" textLength="7" lengthAdjust="spacingAndGlyphs" >?</text>
<path d="M1302 75 L1313 86 M1313 75 L1302 86" fill="none" stroke="#000" stroke-width="1.2" />
<rect x="725.5" y="124.5" width="597" height="94" fill="#ffffff" stroke="#d9d9d9" stroke-width="1" />
<rect x="780.5" y="105.5" width="72" height="19" fill="#f0f0f0" stroke="#d9d9d9" stroke-width="1" />
<rect x="725.5" y="103.5" width="55" height="22" fill="#ffffff" stroke="#d9d9d9" stroke-width="1" />
<rect x="726" y="124" width="54" height="2" fill="#ffffff" />
<text x="735" y="120" font-size="12" fill="#000" textLength="34" lengthAdjust="spacingAndGlyphs" >Buscar</text>
<rect x="735" y="121" width="7" height="1" fill="#000"/>
<text x="787" y="120" font-size="12" fill="#000" textLength="59" lengthAdjust="spacingAndGlyphs" >Reemplazar</text>
<rect x="787" y="121" width="7" height="1" fill="#000"/>
<text x="735" y="149" font-size="12" fill="#000" textLength="36" lengthAdjust="spacingAndGlyphs" >Buscar:</text>
<rect x="742" y="150" width="7" height="1" fill="#000"/>
<rect x="827.5" y="134.5" width="487" height="19" fill="#ffffff" stroke="#a3a3a3" stroke-width="1" />
<text x="832" y="148" font-size="12" fill="#000" textLength="30" lengthAdjust="spacingAndGlyphs" >castro</text>
<rect x="1297.5" y="135.5" width="16" height="17" fill="#e1e1e1" stroke="#adadad" stroke-width="1" />
<path d="M1301.5 142 L1305.5 146 L1309.5 142" fill="none" stroke="#444" stroke-width="1" />
<rect x="1229.5" y="187.5" width="84" height="21" fill="#e1e1e1" stroke="#adadad" stroke-width="1" />
<text x="1237" y="203" font-size="12" fill="#000" textLength="66" lengthAdjust="spacingAndGlyphs" >Opciones &gt;&gt;</text>
<rect x="1242" y="204" width="7" height="1" fill="#000"/>
<rect x="1034.5" y="228.5" width="83" height="21" fill="#e1e1e1" stroke="#adadad" stroke-width="1" />
<text x="1042" y="243" font-size="12" fill="#000" textLength="66" lengthAdjust="spacingAndGlyphs" >Buscar todos</text>
<rect x="1084" y="244" width="6" height="1" fill="#000"/>
<rect x="1128" y="228" width="102" height="22" fill="#e1e1e1" />
<rect x="1129" y="229" width="100" height="20" fill="none" stroke="#0078d7" stroke-width="2"/>
<text x="1136" y="243" font-size="12" fill="#000" textLength="85" lengthAdjust="spacingAndGlyphs" >Buscar siguiente</text>
<rect x="1174" y="244" width="5" height="1" fill="#000"/>
<rect x="1249.5" y="228.5" width="73" height="21" fill="#e1e1e1" stroke="#adadad" stroke-width="1" />
<text x="1271" y="243" font-size="12" fill="#000" textLength="30" lengthAdjust="spacingAndGlyphs" >Cerrar</text>
<rect x="719.5" y="259.5" width="610" height="255" fill="#ffffff" stroke="#828282" stroke-width="1" />
<rect x="914" y="261" width="1" height="22" fill="#e5e5e5"/>
<rect x="966" y="261" width="1" height="22" fill="#e5e5e5"/>
<rect x="1027" y="261" width="1" height="22" fill="#e5e5e5"/>
<rect x="1084" y="261" width="1" height="22" fill="#e5e5e5"/>
<rect x="1275" y="261" width="1" height="22" fill="#e5e5e5"/>
<text x="727" y="277" font-size="12" fill="#000" textLength="26" lengthAdjust="spacingAndGlyphs" >Libro</text>
<text x="921" y="277" font-size="12" fill="#000" textLength="24" lengthAdjust="spacingAndGlyphs" >Hoja</text>
<text x="973" y="277" font-size="12" fill="#000" textLength="40" lengthAdjust="spacingAndGlyphs" >Nombre</text>
<text x="1033" y="277" font-size="12" fill="#000" textLength="29" lengthAdjust="spacingAndGlyphs" >Celda</text>
<text x="1091" y="277" font-size="12" fill="#000" textLength="28" lengthAdjust="spacingAndGlyphs" >Valor</text>
<text x="1281" y="277" font-size="12" fill="#000" textLength="36" lengthAdjust="spacingAndGlyphs" >Fórm...</text>
<rect x="725" y="285" width="602" height="17" fill="#0078d7" />
<rect x="725.5" y="285.5" width="601" height="16" fill="none" stroke="#d99000" stroke-width="1" stroke-dasharray="1,1" opacity="0.5"/>
<text x="727" y="298" font-size="12" fill="#ffffff" textLength="178" lengthAdjust="spacingAndGlyphs" >Base Datos Proy. Pollos Pio Pio.xlsx</text>
<text x="921" y="298" font-size="12" fill="#ffffff" textLength="31" lengthAdjust="spacingAndGlyphs" >Fase II</text>
<text x="1033" y="298" font-size="12" fill="#ffffff" textLength="38" lengthAdjust="spacingAndGlyphs" >$C$162</text>
<text x="1091" y="298" font-size="12" fill="#ffffff" textLength="169.0" lengthAdjust="spacingAndGlyphs" >Castro Calderon Efrain Alejandro</text>
<text x="727" y="315" font-size="12" fill="#000" textLength="178" lengthAdjust="spacingAndGlyphs" >Base Datos Proy. Pollos Pio Pio.xlsx</text>
<text x="921" y="315" font-size="12" fill="#000" textLength="31" lengthAdjust="spacingAndGlyphs" >Fase II</text>
<text x="1033" y="315" font-size="12" fill="#000" textLength="38" lengthAdjust="spacingAndGlyphs" >$C$212</text>
<text x="1091" y="315" font-size="12" fill="#000" textLength="174.8" lengthAdjust="spacingAndGlyphs" >Castro Dueñas Delfina Esperanza</text>
<text x="727" y="332" font-size="12" fill="#000" textLength="178" lengthAdjust="spacingAndGlyphs" >Base Datos Proy. Pollos Pio Pio.xlsx</text>
<text x="921" y="332" font-size="12" fill="#000" textLength="31" lengthAdjust="spacingAndGlyphs" >Fase II</text>
<text x="1033" y="332" font-size="12" fill="#000" textLength="38" lengthAdjust="spacingAndGlyphs" >$C$213</text>
<text x="1091" y="332" font-size="12" fill="#000" textLength="151.0" lengthAdjust="spacingAndGlyphs" >Rodriguez Castro Carlos Luis</text>
<text x="727" y="349" font-size="12" fill="#000" textLength="178" lengthAdjust="spacingAndGlyphs" >Base Datos Proy. Pollos Pio Pio.xlsx</text>
<text x="921" y="349" font-size="12" fill="#000" textLength="31" lengthAdjust="spacingAndGlyphs" >Fase II</text>
<text x="1033" y="349" font-size="12" fill="#000" textLength="38" lengthAdjust="spacingAndGlyphs" >$C$214</text>
<text x="1091" y="349" font-size="12" fill="#000" textLength="163.9" lengthAdjust="spacingAndGlyphs" >Rodriguez Castro Maria Cecibel</text>
<text x="721" y="529" font-size="12" fill="#000" textLength="113" lengthAdjust="spacingAndGlyphs" >4 celda(s) encontradas</text>
<rect x="1325" y="525" width="2" height="2" fill="#b0b0b0" />
<rect x="1321" y="529" width="2" height="2" fill="#b0b0b0" />
<rect x="1325" y="529" width="2" height="2" fill="#b0b0b0" />
<rect x="1317" y="532" width="2" height="2" fill="#b0b0b0" />
<rect x="1321" y="532" width="2" height="2" fill="#b0b0b0" />
<rect x="1325" y="532" width="2" height="2" fill="#b0b0b0" />
</svg></body></html>
